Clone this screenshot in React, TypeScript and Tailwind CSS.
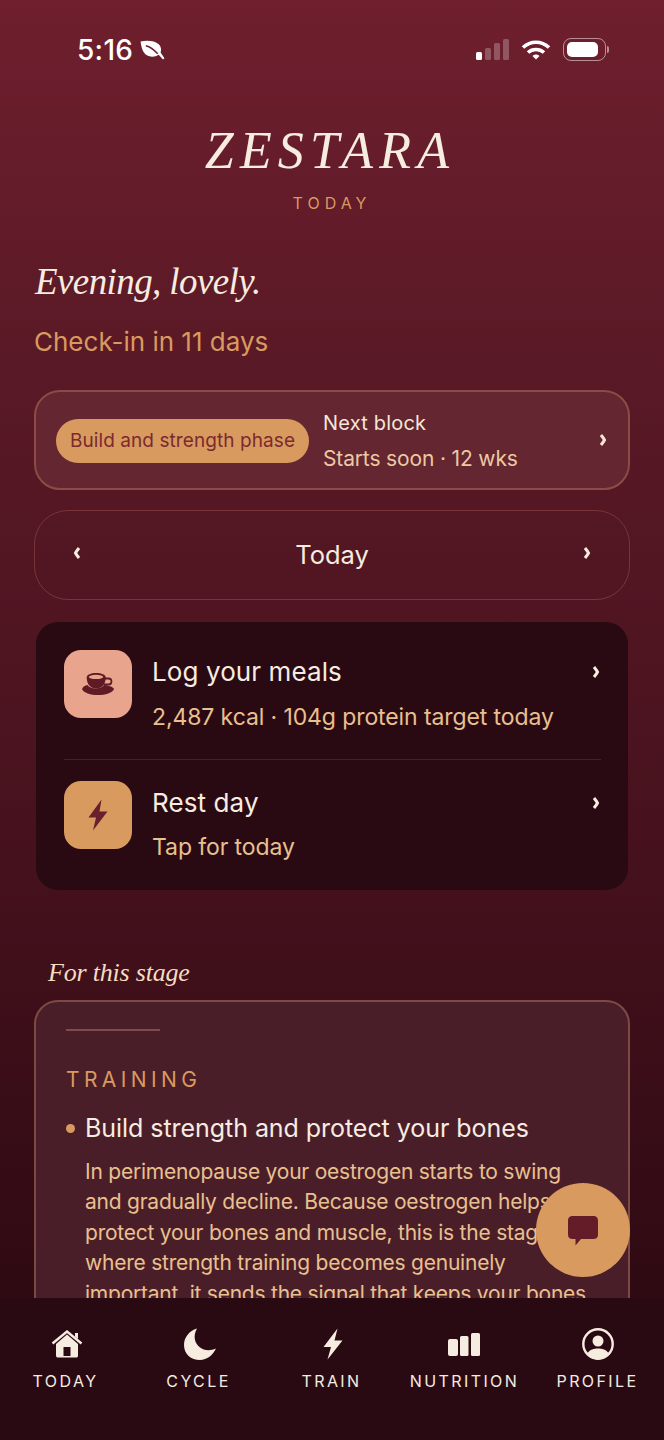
import React from "react";

const sans = "font-['Inter','Noto_Sans',sans-serif]";
const serif = "font-['Liberation_Serif',serif]";

function ChevronRight({ className = "" }: { className?: string }) {
  return (
    <svg viewBox="0 0 8 12" className={`w-[8px] h-[12px] ${className}`} fill="none">
      <path d="M2 1 C4 3.5 5 5 5.5 6 C5 7 4 8.5 2 11" stroke="currentColor" strokeWidth="3" />
    </svg>
  );
}

function ChevronLeft({ className = "" }: { className?: string }) {
  return (
    <svg viewBox="0 0 8 12" className={`w-[8px] h-[12px] ${className}`} fill="none">
      <path d="M6 1 C4 3.5 3 5 2.5 6 C3 7 4 8.5 6 11" stroke="currentColor" strokeWidth="3" />
    </svg>
  );
}

function StatusBar() {
  return (
    <div className="flex items-center justify-between pl-[77px] pr-[55px] pt-[35px] h-[64px] text-white">
      <div className="flex items-center gap-[7px]">
        <span className="font-medium text-[28px] leading-[30px] tracking-[0.3px]">5:16</span>
        <svg viewBox="0 0 26 22" className="w-[25px] h-[21px] mt-[1px]" fill="currentColor">
          <path d="M0.5 1.5 C7 0 15.5 0.5 19.5 4.5 C22 7 22.5 10 21.5 13 L25.5 19 L24 20.5 L19.5 15.5 C15 18.5 9.5 18 5.5 15 C2.5 12 1 6.5 0.5 1.5 Z" />
          <path d="M6 6 C10 7 14 9.5 18.5 14.5" stroke="#6b1f2d" strokeWidth="1.5" fill="none" />
        </svg>
      </div>
      <div className="flex items-center gap-[12px]">
        <div className="flex items-end gap-[3px] h-[21px]">
          <div className="w-[6px] h-[8px] rounded-[1.5px] bg-white" />
          <div className="w-[6px] h-[12px] rounded-[1.5px] bg-white/25" />
          <div className="w-[6px] h-[17px] rounded-[1.5px] bg-white/25" />
          <div className="w-[6px] h-[21px] rounded-[1.5px] bg-white/25" />
        </div>
        <svg viewBox="0 0 30 22" className="w-[30px] h-[22px]" fill="none" stroke="white" strokeWidth="3.6">
          <path d="M2 8.5 C9.5 1.5 20.5 1.5 28 8.5" />
          <path d="M7 13.5 C11.5 9.5 18.5 9.5 23 13.5" />
          <path d="M11.5 17 L15 20.5 L18.5 17 C16.5 15 13.5 15 11.5 17 Z" fill="white" stroke="none" />
        </svg>
        <div className="flex items-center gap-[1px]">
          <div className="w-[43px] h-[23px] rounded-[8px] border-[1.5px] border-white/50 p-[3px]">
            <div className="w-[31px] h-full rounded-[5px] bg-white" />
          </div>
          <div className="w-[2px] h-[7px] rounded-r-full bg-white/50" />
        </div>
      </div>
    </div>
  );
}

function ActionRow({
  icon,
  iconBg,
  title,
  sub,
}: {
  icon: React.ReactNode;
  iconBg: string;
  title: string;
  sub: string;
}) {
  return (
    <div className="flex items-start">
      <div className={`w-[68px] h-[68px] rounded-[17px] flex items-center justify-center shrink-0 ${iconBg}`}>{icon}</div>
      <div className="ml-[20px] flex-1">
        <div className="text-[26px] leading-[32px] text-[#f7ece0] mt-[6px] tracking-[0.1px]">{title}</div>
        <div className="text-[23px] leading-[32px] text-[#e9c08f] mt-[12.5px] tracking-[-0.1px]">{sub}</div>
      </div>
      <ChevronRight className="text-[#f7ece0] mt-[16px] mr-[1px]" />
    </div>
  );
}

function NavItem({ icon, label }: { icon: React.ReactNode; label: string }) {
  return (
    <div className="flex flex-col items-center w-[133px] shrink-0">
      <div className="h-[34px] flex items-center justify-center">{icon}</div>
      <div className="text-[16px] leading-[22px] tracking-[2.4px] mt-[9px] text-[#f5ece0]">{label}</div>
    </div>
  );
}

export default function App() {
  return (
    <div className={`relative w-[664px] h-[1440px] overflow-hidden flex flex-col bg-[linear-gradient(180deg,#6f1f2e_0%,#5a1926_25%,#4c1420_50%,#3f0f1a_68%,#2f0a13_90%)] ${sans}`}>
      <main className="flex-1 overflow-hidden">
        <StatusBar />
        <div className="text-center mt-[60px]">
          <h1 className={`${serif} italic text-[52px] leading-[54px] tracking-[6.2px] pr-[4px] text-[#f7ece0]`}>ZESTARA</h1>
          <div className="text-[16px] leading-[20px] tracking-[5px] text-[#d99a5f] mt-[15px]">TODAY</div>
        </div>

        <div className="px-[34px]">
          <h2 className={`${serif} italic text-[37px] leading-[44px] tracking-[-0.6px] text-[#f7ece0] mt-[47px] ml-[1px]`}>Evening, lovely.</h2>
          <p className="text-[26px] leading-[32px] text-[#d99a5f] mt-[22px]">Check-in in 11 days</p>

          <div className="mt-[32px] h-[100px] rounded-[26px] border-2 border-[#8c4c45] bg-[#642630] flex items-center pl-[20px] pr-[21px] pt-[2px]">
            <div className="h-[44px] w-[253px] rounded-full bg-[#d99a5f] flex items-center justify-center text-[19px] tracking-[0.08px] text-[#7b2a2f] shrink-0">
              Build and strength phase
            </div>
            <div className="ml-[14px] flex-1">
              <div className="text-[20px] leading-[28px] tracking-[0.2px] text-[#f5e6d8]">Next block</div>
              <div className="text-[21px] leading-[28px] tracking-[-0.15px] text-[#ecc9a3] mt-[8px]">Starts soon · 12 wks</div>
            </div>
            <ChevronRight className="text-[#f5e6d8] mt-[-2px]" />
          </div>

          <div className="mt-[20px] h-[90px] rounded-[34px] border border-[#7a3438] flex items-center justify-between pl-[38px] pr-[38px]">
            <ChevronLeft className="text-[#f7ece0] mt-[-4px]" />
            <span className="text-[25.5px] text-[#f7ece0] mt-[1px]">Today</span>
            <ChevronRight className="text-[#f7ece0] mt-[-4px]" />
          </div>

          <div className="mt-[22px] h-[268px] mx-[2px] rounded-[22px] bg-[#2a0a12] pt-[28px] pl-[28px] pr-[27px]">
            <ActionRow
              iconBg="bg-[#e8a48c]"
              title="Log your meals"
              sub="2,487 kcal · 104g protein target today"
              icon={
                <svg viewBox="0 0 32 20" preserveAspectRatio="none" className="w-[32px] h-[22px]" fill="#5f1a26">
                  <path d="M0 14.5 C1 12.5 3 11.5 5.5 11 C8 15 18 15.5 22.5 11 C26 11.5 31 12.5 32 14.5 C31 18 23 20 16 20 C9 20 1 18 0 14.5 Z" />
                  <path d="M4.7 4 C4.7 1.5 9 0 14 0 C19.5 0 23.7 1.5 23.7 4 C23.7 10 20 14 14 14 C8.5 14 4.7 10 4.7 4 Z" />
                  <path d="M23 5 H26.5 C30.5 5 30.5 10.5 26.5 10.5 H21.5" fill="none" stroke="#5f1a26" strokeWidth="1.7" />
                  <ellipse cx="14" cy="3.6" rx="7.2" ry="1.9" fill="#e8a48c" />
                </svg>
              }
            />
            <div className="h-px bg-white/10 mt-[26px] mb-[21px]" />
            <ActionRow
              iconBg="bg-[#d99a5f]"
              title="Rest day"
              sub="Tap for today"
              icon={
                <svg viewBox="0 0 20 32" className="w-[20px] h-[32px]" fill="#6b1f2d">
                  <path d="M13.5 0.5 L0.5 18.5 H8 L5 31.5 L19.5 12.5 H11.5 Z" />
                </svg>
              }
            />
          </div>

          <h3 className={`${serif} italic text-[26px] leading-[34px] tracking-[-0.2px] text-[#f5dcc0] mt-[66px] ml-[14px]`}>For this stage</h3>

          <div className="mt-[10px] h-[400px] rounded-[24px] border-2 border-[#7c4a43] bg-[#4a1e29] pl-[30px] pr-[24px] pt-[27px]">
            <div className="w-[94px] h-[2px] bg-[#7f4c46]" />
            <div className="text-[21px] leading-[26px] tracking-[4.4px] text-[#d99a5f] mt-[36px]">TRAINING</div>
            <div className="flex items-center mt-[19px]">
              <div className="w-[9px] h-[9px] rounded-full bg-[#d99a5f] mr-[10px]" />
              <div className="text-[25px] leading-[32px] text-[#f7ece0] tracking-[-0.05px]">Build strength and protect your bones</div>
            </div>
            <p className="ml-[19px] mt-[13px] text-[21px] leading-[30.4px] text-[#e9c08f] tracking-[-0.23px] whitespace-nowrap">
              In perimenopause your oestrogen starts to swing
              <br />
              and gradually decline. Because oestrogen helps
              <br />
              protect your bones and muscle, this is the stage
              <br />
              where strength training becomes genuinely
              <br />
              important. it sends the signal that keeps your bones
            </p>
          </div>
        </div>
      </main>

      <div className="absolute left-[536px] top-[1183px] w-[94px] h-[94px] rounded-full bg-[#d99a5f] flex items-center justify-center">
        <svg viewBox="0 0 30 30" className="w-[30px] h-[30px] mt-[1px]" fill="#641c29">
          <path d="M5 0 H25 C28.5 0 30 1.5 30 5 V18.5 C30 21.5 28.5 23 25 23 H13 L7.5 29.5 V23 H5 C1.5 23 0 21.5 0 18.5 V5 C0 1.5 1.5 0 5 0 Z" />
        </svg>
      </div>

      <nav className="h-[142px] shrink-0 bg-[#2a0a12] flex pt-[29px]">
        <div className="flex -ml-[1px]">
          <NavItem
            label="TODAY"
            icon={
              <svg viewBox="0 0 32 28" className="w-[32px] h-[28px] ml-[2px]" fill="#f7ece0">
                <path d="M16 4.5 L5 14 V25.5 C5 27 6 27.5 7 27.5 H25 C26.5 27.5 27 27 27 25.5 V14 Z M12.5 17 H19.5 V26 H12.5 Z" fillRule="evenodd" />
                <path d="M1.5 13.5 L16 1.5 L30.5 13.5" fill="none" stroke="#f7ece0" strokeWidth="2.4" />
                <path d="M24 3 H27 V9 L24 6.5 Z" />
              </svg>
            }
          />
          <NavItem
            label="CYCLE"
            icon={
              <svg viewBox="0 0 32 32" className="w-[32px] h-[32px] ml-[3px]" fill="#f7ece0">
                <path d="M13 0.5 C5 3 0 9.5 0 17 C0 26 7 32 16 32 C23 32 29 27 32 20.5 C22 25 13 20 11 12 C10 8 11 4 13 0.5 Z" />
              </svg>
            }
          />
          <NavItem
            label="TRAIN"
            icon={
              <svg viewBox="0 0 20 32" className="w-[20px] h-[32px] ml-[2px]" fill="#f7ece0">
                <path d="M14.5 0.5 L0.5 19 H8 L4.5 31.5 L19.5 12.5 H11.5 Z" />
              </svg>
            }
          />
          <NavItem
            label="NUTRITION"
            icon={
              <svg viewBox="0 0 32 23" className="w-[32px] h-[23px] -ml-[1px]" fill="#f7ece0">
                <rect x="0" y="6" width="10" height="17" rx="2" />
                <rect x="12" y="3" width="8.5" height="20" rx="1.5" />
                <rect x="23" y="0" width="9" height="23" rx="1.5" />
              </svg>
            }
          />
          <NavItem
            label="PROFILE"
            icon={
              <svg viewBox="0 0 32 32" className="w-[32px] h-[32px]">
                <circle cx="16" cy="16" r="14.7" fill="none" stroke="#f7ece0" strokeWidth="2.4" />
                <circle cx="16" cy="13" r="5.5" fill="#f7ece0" />
                <path d="M5 26 C8 21 12 20.5 16 20.5 C20 20.5 24 21 27 26 C24 30 20 31.5 16 31.5 C12 31.5 8 30 5 26 Z" fill="#f7ece0" />
              </svg>
            }
          />
        </div>
      </nav>
    </div>
  );
}
